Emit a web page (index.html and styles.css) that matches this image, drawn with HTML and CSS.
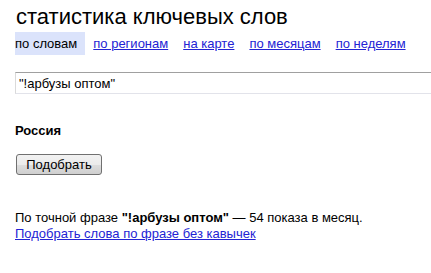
FILE: index.html
```html
<!DOCTYPE html>
<html lang="ru">
<head>
    <meta charset="UTF-8">
    <title>Статистика ключевых слов</title>
    <link rel="stylesheet" href="styles.css">
</head>
<body>
    <h1>статистика ключевых слов</h1>

    <div class="tabs">
        <span class="tab active">по словам</span>
        <a class="tab" href="#">по регионам</a>
        <a class="tab" href="#">на карте</a>
        <a class="tab" href="#">по месяцам</a>
        <a class="tab" href="#">по неделям</a>
    </div>

    <form class="search">
        <input type="text" class="phrase" value="&quot;!арбузы оптом&quot;">
        <div class="region">Россия</div>
        <button type="button">Подобрать</button>
    </form>

    <div class="result">
        <p>По точной фразе <b>"!арбузы оптом"</b> — 54 показа в месяц.</p>
        <a href="#">Подобрать слова по фразе без кавычек</a>
    </div>
</body>
</html>
```
FILE: styles.css
```css
body {
    font-family: Arial, "Liberation Sans", sans-serif;
    font-size: 13px;
    color: #000;
    margin: 0;
    padding: 0 0 0 15px;
    overflow: hidden;
}
h1 {
    font-size: 22px;
    font-weight: normal;
    margin: 0;
    padding: 2px 0 0 1px;
    line-height: 29px;
}
.tabs {
    display: flex;
    gap: 15px;
    margin-top: 1px;
}
.tab {
    line-height: 23px;
}
.tab.active {
    background: #dbe3fb;
    padding: 0 8px 0 0;
    margin-right: -7px;
}
.tabs a {
    color: #2323d4;
}
.search {
    margin: 0;
    padding-top: 17px;
}
.phrase {
    display: block;
    box-sizing: border-box;
    width: 430px;
    height: 22px;
    margin: 0;
    padding: 0 3px;
    font-family: inherit;
    font-size: 13px;
    border: 1px solid #e2e3ea;
    border-top-color: #a0a0a0;
    border-left-color: #dadada;
    outline: none;
}
.region {
    font-weight: bold;
    margin-top: 29px;
    line-height: 16px;
}
button {
    display: block;
    margin: 15px 0 0 1px;
    width: 86px;
    height: 21px;
    padding: 0;
    font-family: inherit;
    font-size: 13px;
    color: #000;
    border: 1px solid #707070;
    border-radius: 3px;
    background: linear-gradient(#f2f2f2, #ebebeb 50%, #dddddd 51%, #cfcfcf);
}
.result {
    margin-top: 35px;
    line-height: 16px;
}
.result p {
    margin: 0;
}
.result a {
    color: #2323d4;
}
```
